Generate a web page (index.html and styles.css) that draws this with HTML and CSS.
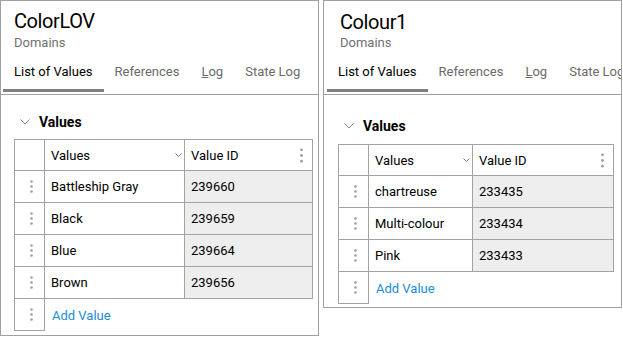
FILE: index.html
```html
<!DOCTYPE html>
<html lang="en">
<head>
    <meta charset="UTF-8">
    <meta name="viewport" content="width=device-width, initial-scale=1.0">
    <title>Domains</title>
    <link rel="stylesheet" href="styles.css">
</head>
<body>
    <div class="panels">
        <section class="panel panel-a">
            <header class="panel-head">
                <h1 class="title">ColorLOV</h1>
                <div class="subtitle">Domains</div>
            </header>
            <nav class="tabs">
                <span class="tab active">List of Values</span>
                <span class="tab">References</span>
                <span class="tab"><u>L</u>og</span>
                <span class="tab">State Log</span>
            </nav>
            <div class="section">
                <div class="section-title">
                    <svg class="chev" width="10" height="6" viewBox="0 0 10 6"><polyline points="0.5,0.5 5,5 9.5,0.5"/></svg>
                    <span>Values</span>
                </div>
                <div class="grid grid-a">
                    <div class="cell head"></div>
                    <div class="cell head name">Values <svg class="sort" width="7" height="5" viewBox="0 0 7 5"><polyline points="0.5,0.5 3.5,3.5 6.5,0.5"/></svg></div>
                    <div class="cell head id-head">Value ID <svg class="kebab" width="3" height="15" viewBox="0 0 3 15"><circle cx="1.5" cy="1.8" r="1.4"/><circle cx="1.5" cy="7.5" r="1.4"/><circle cx="1.5" cy="13.2" r="1.4"/></svg></div>

                    <div class="cell handle"><svg class="kebab" width="3" height="13" viewBox="0 0 3 13"><circle cx="1.5" cy="1.5" r="1.3"/><circle cx="1.5" cy="6.5" r="1.3"/><circle cx="1.5" cy="11.5" r="1.3"/></svg></div>
                    <div class="cell">Battleship Gray</div>
                    <div class="cell id">239660</div>

                    <div class="cell handle"><svg class="kebab" width="3" height="13" viewBox="0 0 3 13"><circle cx="1.5" cy="1.5" r="1.3"/><circle cx="1.5" cy="6.5" r="1.3"/><circle cx="1.5" cy="11.5" r="1.3"/></svg></div>
                    <div class="cell">Black</div>
                    <div class="cell id">239659</div>

                    <div class="cell handle"><svg class="kebab" width="3" height="13" viewBox="0 0 3 13"><circle cx="1.5" cy="1.5" r="1.3"/><circle cx="1.5" cy="6.5" r="1.3"/><circle cx="1.5" cy="11.5" r="1.3"/></svg></div>
                    <div class="cell">Blue</div>
                    <div class="cell id">239664</div>

                    <div class="cell handle"><svg class="kebab" width="3" height="13" viewBox="0 0 3 13"><circle cx="1.5" cy="1.5" r="1.3"/><circle cx="1.5" cy="6.5" r="1.3"/><circle cx="1.5" cy="11.5" r="1.3"/></svg></div>
                    <div class="cell">Brown</div>
                    <div class="cell id">239656</div>

                    <div class="cell handle"><svg class="kebab" width="3" height="13" viewBox="0 0 3 13"><circle cx="1.5" cy="1.5" r="1.3"/><circle cx="1.5" cy="6.5" r="1.3"/><circle cx="1.5" cy="11.5" r="1.3"/></svg></div>
                    <div class="add"><a href="#">Add Value</a></div>
                </div>
            </div>
        </section>

        <section class="panel panel-b">
            <header class="panel-head">
                <h1 class="title">Colour1</h1>
                <div class="subtitle">Domains</div>
            </header>
            <nav class="tabs">
                <span class="tab active">List of Values</span>
                <span class="tab">References</span>
                <span class="tab"><u>L</u>og</span>
                <span class="tab">State Log</span>
            </nav>
            <div class="section">
                <div class="section-title">
                    <svg class="chev" width="10" height="6" viewBox="0 0 10 6"><polyline points="0.5,0.5 5,5 9.5,0.5"/></svg>
                    <span>Values</span>
                </div>
                <div class="grid grid-b">
                    <div class="cell head"></div>
                    <div class="cell head name">Values <svg class="sort" width="7" height="5" viewBox="0 0 7 5"><polyline points="0.5,0.5 3.5,3.5 6.5,0.5"/></svg></div>
                    <div class="cell head id-head">Value ID <svg class="kebab" width="3" height="15" viewBox="0 0 3 15"><circle cx="1.5" cy="1.8" r="1.4"/><circle cx="1.5" cy="7.5" r="1.4"/><circle cx="1.5" cy="13.2" r="1.4"/></svg></div>

                    <div class="cell handle"><svg class="kebab" width="3" height="13" viewBox="0 0 3 13"><circle cx="1.5" cy="1.5" r="1.3"/><circle cx="1.5" cy="6.5" r="1.3"/><circle cx="1.5" cy="11.5" r="1.3"/></svg></div>
                    <div class="cell">chartreuse</div>
                    <div class="cell id">233435</div>

                    <div class="cell handle"><svg class="kebab" width="3" height="13" viewBox="0 0 3 13"><circle cx="1.5" cy="1.5" r="1.3"/><circle cx="1.5" cy="6.5" r="1.3"/><circle cx="1.5" cy="11.5" r="1.3"/></svg></div>
                    <div class="cell">Multi-colour</div>
                    <div class="cell id">233434</div>

                    <div class="cell handle"><svg class="kebab" width="3" height="13" viewBox="0 0 3 13"><circle cx="1.5" cy="1.5" r="1.3"/><circle cx="1.5" cy="6.5" r="1.3"/><circle cx="1.5" cy="11.5" r="1.3"/></svg></div>
                    <div class="cell">Pink</div>
                    <div class="cell id">233433</div>

                    <div class="cell handle"><svg class="kebab" width="3" height="13" viewBox="0 0 3 13"><circle cx="1.5" cy="1.5" r="1.3"/><circle cx="1.5" cy="6.5" r="1.3"/><circle cx="1.5" cy="11.5" r="1.3"/></svg></div>
                    <div class="add"><a href="#">Add Value</a></div>
                </div>
            </div>
        </section>
    </div>
</body>
</html>
```

FILE: styles.css
```css
* {
    margin: 0;
    padding: 0;
    box-sizing: border-box;
}

body {
    font-family: Roboto, "Liberation Sans", sans-serif;
    font-size: 13px;
    color: #000;
    background-color: #fff;
}

.panels {
    display: flex;
    align-items: flex-start;
    gap: 4px;
}

.panel {
    border: 1px solid #a0a0a0;
    overflow: hidden;
}

.panel-a {
    width: 319px;
    height: 336px;
}

.panel-b {
    width: 299px;
    height: 308px;
}

/* Header */
.panel-head {
    padding: 8px 13px 0;
}

.panel-b .panel-head {
    padding: 9px 16px 0;
}

.title {
    font-size: 20px;
    font-weight: normal;
    line-height: 24px;
    letter-spacing: -0.4px;
}

.subtitle {
    margin-top: 2px;
    line-height: 16px;
    color: #707070;
}

.panel-b .subtitle {
    margin-top: 1px;
}

/* Tabs */
.tabs {
    display: flex;
    white-space: nowrap;
    margin-top: 13px;
    padding: 0 0 2px 2px;
    border-bottom: 1px solid #a0a0a0;
}

.panel-b .tabs {
    padding-left: 3px;
}

.tab {
    padding: 0 11px 9px;
    line-height: 16px;
    color: #6b6b6b;
    border-bottom: 3px solid transparent;
}

.tab.active {
    color: #000;
    border-bottom-color: #808080;
}

/* Values section */
.section {
    padding: 19px 0 0 13px;
}

.panel-b .section {
    padding: 23px 0 0 14px;
}

.section-title {
    display: flex;
    align-items: center;
    font-size: 14px;
    font-weight: bold;
    line-height: 16px;
    margin-bottom: 9px;
}

.panel-b .section-title {
    margin-bottom: 10px;
}

.chev {
    margin: 0 9px 0 6px;
    fill: none;
    stroke: #8a8a8a;
}

.grid {
    display: grid;
    width: fit-content;
    grid-template-rows: 31px;
    grid-auto-rows: 32px;
    border-left: 1px solid #a3a3a3;
    border-top: 1px solid #a3a3a3;
}

.grid-a {
    grid-template-columns: 30px 140px 128px;
}

.grid-b {
    grid-template-columns: 30px 104px 141px;
}

.cell {
    display: flex;
    align-items: center;
    padding: 0 6px;
    border-right: 1px solid #a3a3a3;
    border-bottom: 1px solid #a3a3a3;
    white-space: nowrap;
}

.cell.id {
    background-color: #eeeeee;
}

.cell.name {
    justify-content: space-between;
    padding-right: 2px;
}

.cell.id-head {
    justify-content: space-between;
    padding-right: 9px;
}

.cell.handle {
    justify-content: center;
    padding: 0 0 0 4px;
}

.sort {
    fill: none;
    stroke: #7a7a7a;
}

.kebab {
    fill: #9e9e9e;
}

.add {
    grid-column: span 2;
    display: flex;
    align-items: center;
    padding-left: 7px;
}

.add a {
    color: #1a8cd8;
    text-decoration: none;
}
```
